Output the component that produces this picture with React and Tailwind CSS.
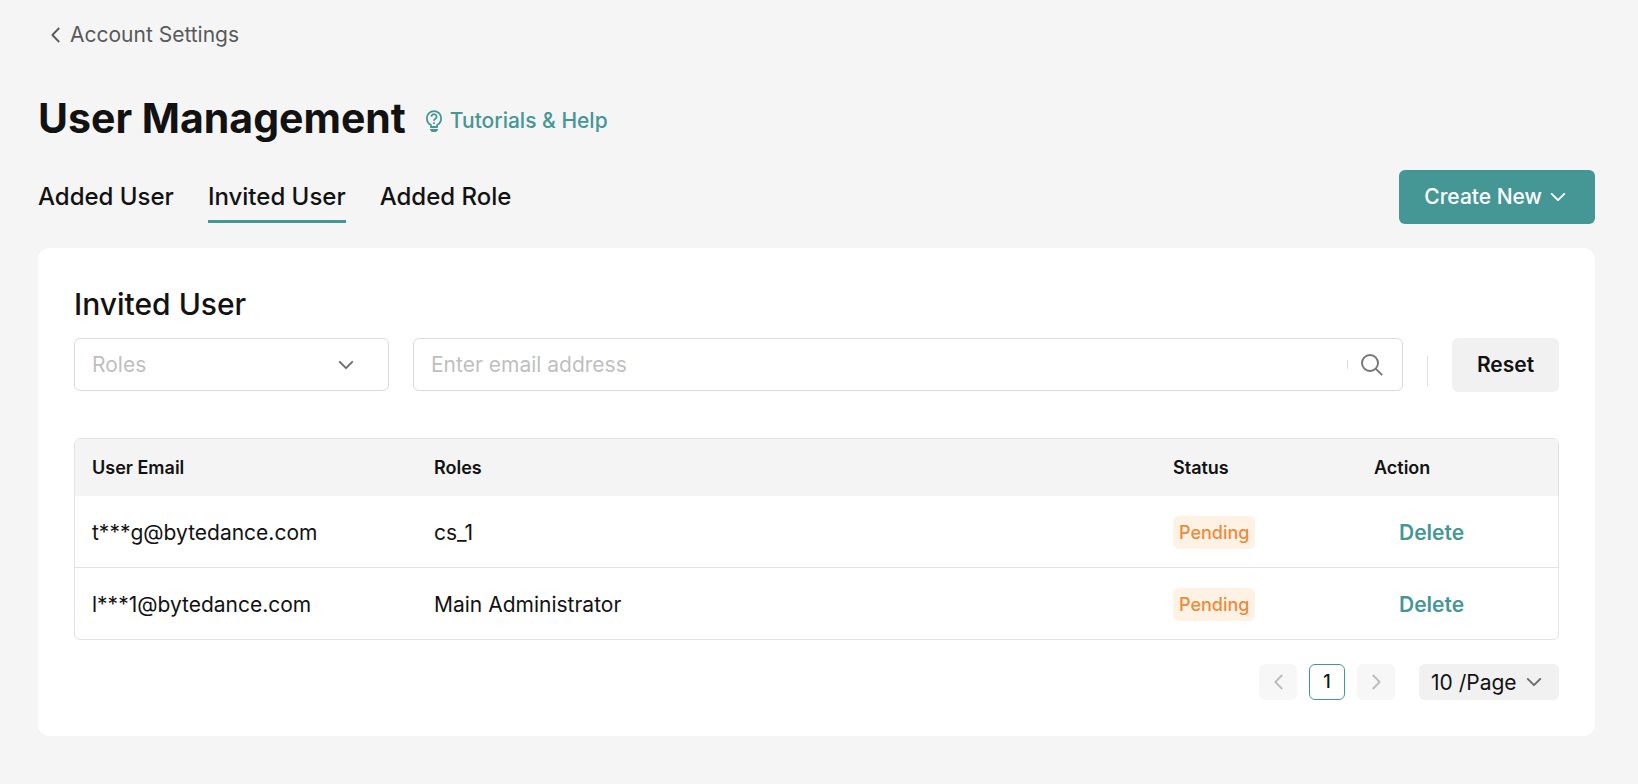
import React from "react";

const ChevronLeft = ({ className }) => (
  <svg className={className} viewBox="0 0 9 16" fill="none" stroke="currentColor" strokeWidth="1.8" strokeLinejoin="round" aria-hidden="true">
    <path d="M8.200 1 1.400 8l6.800 7" />
  </svg>
);

const ChevronDown = ({ className }) => (
  <svg className={className} viewBox="0 0 16 10" fill="none" stroke="currentColor" strokeWidth="1.9" strokeLinejoin="round" aria-hidden="true">
    <path d="M1.2 1.4 8 8.2l6.8-6.8" />
  </svg>
);

const SearchIcon = ({ className }) => (
  <svg className={className} viewBox="0 0 22 22" fill="none" stroke="currentColor" strokeWidth="1.9" aria-hidden="true">
    <circle cx="9" cy="9" r="8" />
    <path d="m14.6 14.6 6.6 6.6" />
  </svg>
);

const HelpBulb = ({ className }) => (
  <svg className={className} viewBox="0 0 16 22" fill="none" stroke="currentColor" strokeWidth="1.8" aria-hidden="true">
    <path d="M4.900 17v-1.900C2.400 13.600 0.900 11.200 0.900 8.200a7.100 7.100 0 0 1 14.200 0c0 3-1.500 5.400-4 6.900V17z" strokeLinejoin="round" />
    <path d="M5.400 6.700a2.600 2.400 0 1 1 4.100 1.900c-1 .6-1.500 1.100-1.500 2.200" />
    <path d="M8 12.200v1.900" />
    <path d="M4 19h8c0 1.800-1.300 2.900-2.600 2.900H6.600C5.300 21.900 4 20.800 4 19z" fill="currentColor" stroke="none" />
  </svg>
);

const tabs = [
  { label: "Added User", active: false },
  { label: "Invited User", active: true },
  { label: "Added Role", active: false },
];

const users = [
  { email: "t***g@bytedance.com", role: "cs_1", status: "Pending" },
  { email: "l***1@bytedance.com", role: "Main Administrator", status: "Pending" },
];

export default function App() {
  return (
    <div className="min-h-screen bg-[#f5f5f5] pr-[43px] pb-10 pl-[38px] font-['Inter','Liberation_Sans',sans-serif] text-[21px] leading-[30px] text-[#121212]">
      <nav className="flex pt-5 pl-[13px]">
        <a href="#account" className="flex items-center gap-[10px] text-[#58595b]">
          <ChevronLeft className="h-4 w-[9px]" />
          Account Settings
        </a>
      </nav>

      <header className="mt-[38px] flex items-center gap-5">
        <h1 className="text-[41px] leading-[60px] font-bold">User Management</h1>
        <a href="#help" className="mt-[5px] flex items-center gap-2 font-medium text-[#459796]">
          <HelpBulb className="h-[22px] w-4" />
          Tutorials &amp; Help
        </a>
      </header>

      <div className="mt-[22px] flex items-start justify-between">
        <div role="tablist" className="flex gap-[34px]">
          {tabs.map((tab) => (
            <button
              key={tab.label}
              type="button"
              role="tab"
              aria-selected={tab.active}
              className={
                tab.active
                  ? "h-[53px] border-b-3 border-[#459796] pt-1 text-[24px] font-medium"
                  : "h-[53px] border-b-3 border-transparent pt-1 text-[24px] font-medium"
              }
            >
              {tab.label}
            </button>
          ))}
        </div>
        <button type="button" className="flex h-[54px] items-center gap-2 rounded-md bg-[#459796] pr-[29px] pl-[25px] font-medium text-white">
          Create New
          <ChevronDown className="h-[10px] w-4" />
        </button>
      </div>

      <main className="mt-6 rounded-xl bg-white px-9 pt-[38px] pb-9">
        <h2 className="text-[30px] leading-9 font-medium">Invited User</h2>

        <form className="mt-4 flex items-start" onSubmit={(e) => e.preventDefault()}>
          <div className="relative w-[315px]">
            <select aria-label="Roles" defaultValue="" className="h-[53px] w-full appearance-none rounded-md border border-[#dbdbdb] bg-white pr-14 pl-[17px] text-[#bfbfbf] outline-none">
              <option value="">Roles</option>
            </select>
            <ChevronDown className="pointer-events-none absolute top-[22px] right-[35px] h-[10px] w-4 text-[#6b6b6b]" />
          </div>
          <div className="ml-6 flex h-[53px] flex-1 items-center rounded-md border border-[#dbdbdb] pr-[19px] pl-[17px]">
            <input type="text" aria-label="Email address" placeholder="Enter email address" className="min-w-0 flex-1 bg-transparent outline-none placeholder:text-[#bfbfbf]" />
            <span className="h-[9px] w-px bg-[#dbdbdb]" />
            <button type="submit" aria-label="Search" className="ml-[13px] text-[#757575]">
              <SearchIcon className="size-[22px]" />
            </button>
          </div>
          <span className="mt-[18px] ml-6 h-[30px] w-px bg-[#dfdfdf]" />
          <button type="reset" className="ml-6 h-[54px] w-[107px] rounded-md bg-[#f1f1f1] font-semibold">
            Reset
          </button>
        </form>

        <div className="mt-[46px] overflow-hidden rounded-md border border-[#e3e3e3]">
          <table className="w-full table-fixed border-separate border-spacing-0 text-left">
            <colgroup>
              <col className="w-[342px]" />
              <col />
              <col className="w-[201px]" />
              <col className="w-[201px]" />
            </colgroup>
            <thead className="bg-[#f4f4f4] text-[18px]">
              <tr className="h-[57px]">
                <th className="px-[17px] font-semibold">User Email</th>
                <th className="px-[17px] font-semibold">Roles</th>
                <th className="px-[17px] font-semibold">Status</th>
                <th className="px-[17px] font-semibold">Action</th>
              </tr>
            </thead>
            <tbody className="[&>tr:not(:last-child)>td]:border-b [&>tr:not(:last-child)>td]:border-[#e3e3e3]">
              {users.map((user) => (
                <tr key={user.email} className="h-[72px] last:h-[71px]">
                  <td className="px-[17px] pt-0.5">{user.email}</td>
                  <td className="px-[17px] pt-0.5">{user.role}</td>
                  <td className="px-[17px] pt-0.5">
                    <span className="flex h-[33px] w-fit items-center rounded-md bg-[#fef2e5] px-[6px] text-[18px] font-medium text-[#ee8b3a]">
                      {user.status}
                    </span>
                  </td>
                  <td className="px-[17px] pt-0.5">
                    <button type="button" className="ml-[25px] font-semibold text-[#459796]">
                      Delete
                    </button>
                  </td>
                </tr>
              ))}
            </tbody>
          </table>
        </div>

        <div className="mt-6 flex justify-end gap-3">
          <button type="button" disabled aria-label="Previous page" className="flex h-9 w-[38px] items-center justify-center rounded-md bg-[#f7f7f7] text-[#bcbcbc]">
            <ChevronLeft className="h-4 w-[9px]" />
          </button>
          <button type="button" aria-current="page" className="flex size-9 items-center justify-center rounded-md border border-[#459796] text-[18px] font-medium">
            1
          </button>
          <button type="button" disabled aria-label="Next page" className="flex h-9 w-[38px] items-center justify-center rounded-md bg-[#f7f7f7] text-[#bcbcbc]">
            <ChevronLeft className="h-4 w-[9px] rotate-180" />
          </button>
          <div className="relative ml-3 w-[140px]">
            <select aria-label="Rows per page" className="h-9 w-full appearance-none rounded-md bg-[#f1f1f1] pt-px pr-8 pl-3 outline-none">
              <option>10 /Page</option>
            </select>
            <ChevronDown className="pointer-events-none absolute top-[13px] right-[17px] h-[10px] w-4 text-[#6b6b6b]" />
          </div>
        </div>
      </main>
    </div>
  );
}
